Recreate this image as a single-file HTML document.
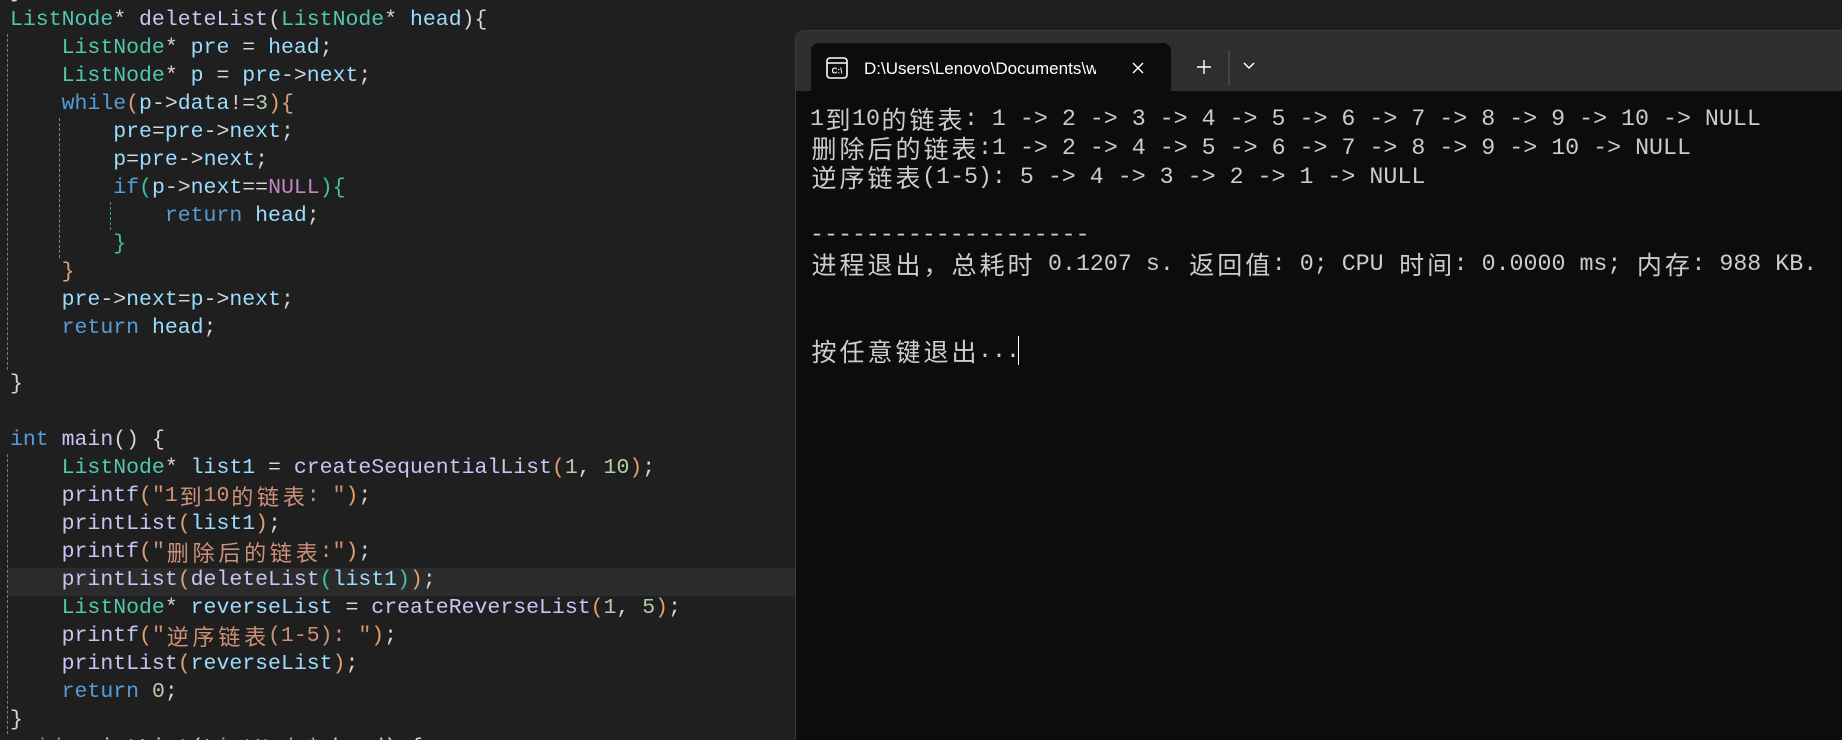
<!DOCTYPE html>
<html><head><meta charset="utf-8">
<style>
*{margin:0;padding:0;box-sizing:border-box}
html,body{width:1842px;height:740px;overflow:hidden;background:#1f1f1f}
#ed{position:absolute;left:0;top:0;width:795px;height:740px;background:#1f1f1f;overflow:hidden}
.ln{position:absolute;left:10px;height:28px;line-height:28px;font-family:"Liberation Mono","Noto Sans CJK SC",monospace;font-size:21.5px;white-space:pre;color:#d4d4d4}
.hl{position:absolute;left:8px;width:787px;top:568px;height:28px;background:#2b2b2b}
.t{color:#4ec9b0}.f{color:#c8c4f4}.v{color:#9cdcfe}.k{color:#569cd6}.n{color:#b5cea8}.s{color:#ce9178}.m{color:#c586c0}.o1{color:#e0a070}.o2{color:#3fc1a6}
.c{display:inline-block;width:25.8px;height:28px;line-height:28px;vertical-align:top;text-align:center;font-family:"Noto Sans CJK SC",sans-serif;font-size:22px;overflow:visible}
.g{position:absolute;width:0;border-left:1px dashed}
#win{position:absolute;left:795px;top:30px;width:1060px;height:710px;background:#2e2e2e;border:1px solid #3a3a3a;border-bottom:none;border-radius:10px 0 0 0;overflow:hidden}
#tab{position:absolute;left:15px;top:12px;width:360px;height:50px;background:#0c0c0c;border-radius:8px 8px 0 0}
#term{position:absolute;left:0;top:60px;width:1060px;height:650px;background:#0c0c0c}
.tl{position:absolute;left:14px;height:29px;line-height:29px;font-family:"Liberation Mono","Noto Sans CJK SC",monospace;font-size:23.3px;white-space:pre;color:#cccccc}
.d{display:inline-block;width:28px;height:29px;line-height:29px;vertical-align:top;text-align:center;font-family:"Noto Sans CJK SC",sans-serif;font-size:25px}
</style></head><body>
<div id="ed">
<div class="hl"></div>
<div class="g" style="left:7px;top:34px;height:336px;border-color:#7a7a7a"></div>
<div class="g" style="left:7px;top:454px;height:280px;border-color:#7a7a7a"></div>
<div class="g" style="left:59px;top:118px;height:140px;border-color:#b07850"></div>
<div class="g" style="left:110px;top:202px;height:28px;border-color:#2fa08a"></div>

<div class="ln" style="top:-22px">}</div>
<div class="ln" style="top:6px"><span class="t">ListNode</span>* <span class="f">deleteList</span>(<span class="t">ListNode</span>* <span class="v">head</span>){</div>
<div class="ln" style="top:34px">    <span class="t">ListNode</span>* <span class="v">pre</span> = <span class="v">head</span>;</div>
<div class="ln" style="top:62px">    <span class="t">ListNode</span>* <span class="v">p</span> = <span class="v">pre</span>-&gt;<span class="v">next</span>;</div>
<div class="ln" style="top:90px">    <span class="k">while</span><span class="o1">(</span><span class="v">p</span>-&gt;<span class="v">data</span>!=<span class="n">3</span><span class="o1">){</span></div>
<div class="ln" style="top:118px">        <span class="v">pre</span>=<span class="v">pre</span>-&gt;<span class="v">next</span>;</div>
<div class="ln" style="top:146px">        <span class="v">p</span>=<span class="v">pre</span>-&gt;<span class="v">next</span>;</div>
<div class="ln" style="top:174px">        <span class="k">if</span><span class="o2">(</span><span class="v">p</span>-&gt;<span class="v">next</span>==<span class="m">NULL</span><span class="o2">){</span></div>
<div class="ln" style="top:202px">            <span class="k">return</span> <span class="v">head</span>;</div>
<div class="ln" style="top:230px">        <span class="o2">}</span></div>
<div class="ln" style="top:258px">    <span class="o1">}</span></div>
<div class="ln" style="top:286px">    <span class="v">pre</span>-&gt;<span class="v">next</span>=<span class="v">p</span>-&gt;<span class="v">next</span>;</div>
<div class="ln" style="top:314px">    <span class="k">return</span> <span class="v">head</span>;</div>
<div class="ln" style="top:370px">}</div>
<div class="ln" style="top:426px"><span class="k">int</span> <span class="f">main</span>() {</div>
<div class="ln" style="top:454px">    <span class="t">ListNode</span>* <span class="v">list1</span> = <span class="f">createSequentialList</span><span class="o1">(</span><span class="n">1</span>, <span class="n">10</span><span class="o1">)</span>;</div>
<div class="ln" style="top:482px">    <span class="f">printf</span><span class="o1">(</span><span class="s">"1<span class="c">到</span>10<span class="c">的</span><span class="c">链</span><span class="c">表</span>: "</span><span class="o1">)</span>;</div>
<div class="ln" style="top:510px">    <span class="f">printList</span><span class="o1">(</span><span class="v">list1</span><span class="o1">)</span>;</div>
<div class="ln" style="top:538px">    <span class="f">printf</span><span class="o1">(</span><span class="s">"<span class="c">删</span><span class="c">除</span><span class="c">后</span><span class="c">的</span><span class="c">链</span><span class="c">表</span>:"</span><span class="o1">)</span>;</div>
<div class="ln" style="top:566px">    <span class="f">printList</span><span class="o1">(</span><span class="f">deleteList</span><span class="o2">(</span><span class="v">list1</span><span class="o2">)</span><span class="o1">)</span>;</div>
<div class="ln" style="top:594px">    <span class="t">ListNode</span>* <span class="v">reverseList</span> = <span class="f">createReverseList</span><span class="o1">(</span><span class="n">1</span>, <span class="n">5</span><span class="o1">)</span>;</div>
<div class="ln" style="top:622px">    <span class="f">printf</span><span class="o1">(</span><span class="s">"<span class="c">逆</span><span class="c">序</span><span class="c">链</span><span class="c">表</span>(1-5): "</span><span class="o1">)</span>;</div>
<div class="ln" style="top:650px">    <span class="f">printList</span><span class="o1">(</span><span class="v">reverseList</span><span class="o1">)</span>;</div>
<div class="ln" style="top:678px">    <span class="k">return</span> <span class="n">0</span>;</div>
<div class="ln" style="top:706px">}</div>
<div class="ln" style="top:734px"><span class="k">void</span> <span class="f">printList</span>(<span class="t">ListNode</span>* <span class="v">head</span>) {</div>
</div>

<div id="win">
 <div id="tab">
  <svg style="position:absolute;left:15px;top:14px" width="22" height="22" viewBox="0 0 22 22">
   <rect x="1" y="1" width="20" height="20" rx="3" fill="none" stroke="#fff" stroke-width="1.6"/>
   <line x1="1" y1="6" x2="21" y2="6" stroke="#fff" stroke-width="1.4"/>
   <text x="11" y="16.5" font-family="Liberation Sans,sans-serif" font-size="8" font-weight="bold" fill="#fff" text-anchor="middle">C:\</text>
  </svg>
  <div style="position:absolute;left:53px;top:13px;width:232px;height:26px;overflow:hidden;font-family:'Liberation Sans',sans-serif;font-size:17px;line-height:26px;color:#fff;white-space:nowrap">D:\Users\Lenovo\Documents\work</div>
  <svg style="position:absolute;left:320px;top:18px" width="14" height="14" viewBox="0 0 14 14"><path d="M2 2L12 12M12 2L2 12" stroke="#fff" stroke-width="1.4"/></svg>
 </div>
 <svg style="position:absolute;left:400px;top:28px" width="16" height="16" viewBox="0 0 16 16"><path d="M8 1V15M1 8H15" stroke="#fff" stroke-width="1.4"/></svg>
 <div style="position:absolute;left:432px;top:19px;width:2px;height:36px;background:#444"></div>
 <svg style="position:absolute;left:446px;top:30px" width="14" height="10" viewBox="0 0 14 10"><path d="M2 2L7 7L12 2" stroke="#fff" stroke-width="1.5" fill="none"/></svg>
 <div id="term">
  <div class="tl" style="top:14px">1<span class="d">到</span>10<span class="d">的</span><span class="d">链</span><span class="d">表</span>: 1 -&gt; 2 -&gt; 3 -&gt; 4 -&gt; 5 -&gt; 6 -&gt; 7 -&gt; 8 -&gt; 9 -&gt; 10 -&gt; NULL</div>
  <div class="tl" style="top:43px"><span class="d">删</span><span class="d">除</span><span class="d">后</span><span class="d">的</span><span class="d">链</span><span class="d">表</span>:1 -&gt; 2 -&gt; 4 -&gt; 5 -&gt; 6 -&gt; 7 -&gt; 8 -&gt; 9 -&gt; 10 -&gt; NULL</div>
  <div class="tl" style="top:72px"><span class="d">逆</span><span class="d">序</span><span class="d">链</span><span class="d">表</span>(1-5): 5 -&gt; 4 -&gt; 3 -&gt; 2 -&gt; 1 -&gt; NULL</div>
  <div class="tl" style="top:130px">--------------------</div>
  <div class="tl" style="top:159px"><span class="d">进</span><span class="d">程</span><span class="d">退</span><span class="d">出</span><span class="d">，</span><span class="d">总</span><span class="d">耗</span><span class="d">时</span> 0.1207 s. <span class="d">返</span><span class="d">回</span><span class="d">值</span>: 0; CPU <span class="d">时</span><span class="d">间</span>: 0.0000 ms; <span class="d">内</span><span class="d">存</span>: 988 KB.</div>
  <div class="tl" style="top:246px"><span class="d">按</span><span class="d">任</span><span class="d">意</span><span class="d">键</span><span class="d">退</span><span class="d">出</span>...</div>
  <div style="position:absolute;left:222px;top:245px;width:1px;height:29px;background:#fff"></div>
 </div>
</div>
</body></html>
